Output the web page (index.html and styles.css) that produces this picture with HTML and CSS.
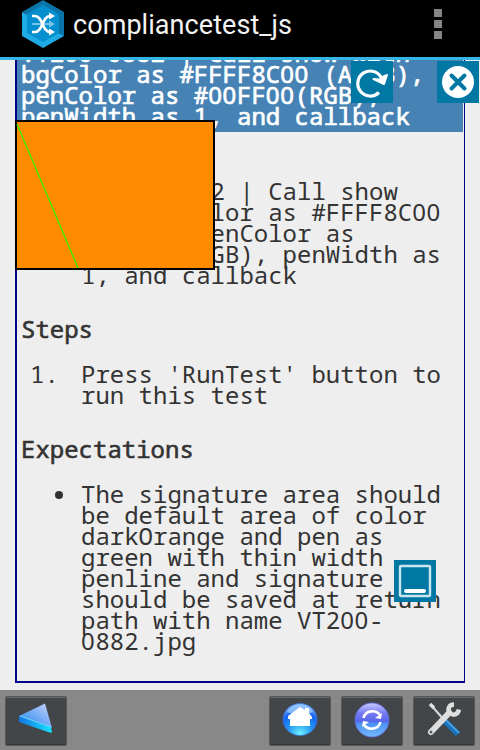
FILE: index.html
```html
<!DOCTYPE html>
<html lang="en">
<head>
<meta charset="utf-8">
<title>compliancetest_js</title>
<link rel="stylesheet" href="styles.css">
</head>
<body>
<header class="appbar">
  <svg class="logo" width="44" height="50" viewBox="0 0 44 50">
    <path fill="#0874a7" d="M22 0 43 12 22 25 1 12z"/>
    <path fill="#1eaae3" d="M1 12 22 24 43 12V36L22 48 1 36z"/>
    <path fill="#0874a7" d="M37 14 43 12V36L37 33z"/>
    <path fill="#068fce" d="M22 5 38 14V33L22 42 6 33V14z"/>
    <path fill="none" stroke="#72c4e8" stroke-width="2" d="M11 24h20"/>
    <path fill="#72c4e8" d="m28 20.500 6 3.500-6 3.500z"/>
    <path fill="none" stroke="#fff" stroke-width="2.600" d="M11 16h3c8 0 7 16 15 16h2M11 32h3c8 0 7-16 15-16h2"/>
    <path fill="#fff" d="m28 12.500 6 3.500-6 3.500zM28 28.500l6 3.500-6 3.500z"/>
  </svg>
  <h1 class="title">compliancetest_js</h1>
  <div class="overflow"><i></i><i></i><i></i></div>
</header>
<main class="view">
  <article class="test">
    <div class="name">VT2<span class="zero">00</span>-<span class="zero">0</span>882 | Call show with<br>bgColor as #FFFF8C<span class="zero">00</span> (ARGB),<br>penColor as #<span class="zero">00</span>FF<span class="zero">00</span>(RGB),<br>penWidth as 1, and callback</div>
    <ul class="list spec"><li>VT2<span class="zero">00</span>-<span class="zero">0</span>882 | Call show<br>with bgColor as #FFFF8C<span class="zero">00</span><br>(ARGB), penColor as<br>#<span class="zero">00</span>FF<span class="zero">00</span>(RGB), penWidth as<br>1, and callback</li></ul>
    <h2>Steps</h2>
    <div class="list step"><span class="num">1.</span><p>Press 'RunTest' button to<br>run this test</p></div>
    <h2>Expectations</h2>
    <div class="list expect"><span class="dot"></span><p>The signature area should<br>be default area of color<br>darkOrange and pen as<br>green with thin width<br>penline and signature<br>should be saved at return<br>path with name VT2<span class="zero">00</span>-<br><span class="zero">0</span>882.jpg</p></div>
  </article>
  <svg class="signature" width="200" height="150" viewBox="0 0 200 150">
    <rect x="1" y="1" width="198" height="148" fill="#ff8c00" stroke="#000" stroke-width="2"/>
    <path d="M2 4 63 148" stroke="#32f000" stroke-width="1.3"/>
  </svg>
  <svg class="float reload" width="42" height="42" viewBox="0 0 42 42">
    <rect width="42" height="42" fill="#0078a3"/>
    <path fill="none" stroke="#fff" stroke-width="3.200" d="M28 31.500A12.500 12.500 0 1 1 30.500 17"/>
    <path fill="#fff" stroke="#fff" stroke-width="2" stroke-linejoin="round" d="m22.500 18 6 .5 4-3 3.500-1.500-3 9z"/>
  </svg>
  <svg class="float close" width="42" height="42" viewBox="0 0 42 42">
    <rect width="42" height="42" fill="#0078a3"/>
    <circle cx="21" cy="21" r="16" fill="#fff"/>
    <path stroke="#0078a3" stroke-width="4" stroke-linecap="round" d="m14.500 14.500 13 13m0-13-13 13"/>
  </svg>
  <svg class="float minimize" width="42" height="42" viewBox="0 0 42 42">
    <rect width="42" height="42" fill="#0078a3"/>
    <rect x="6" y="6" width="30" height="30" rx="1" fill="none" stroke="#c9e5f0" stroke-width="2.400"/>
    <path stroke="#fff" stroke-width="4" stroke-linecap="round" d="M12 31h18"/>
  </svg>
</main>
<nav class="toolbar">
  <div class="btn back"><svg width="62" height="50" viewBox="0 0 62 50">
    <defs>
      <linearGradient id="face" x1="1" y1="0" x2="0" y2="1"><stop stop-color="#cfd8ff"/><stop offset=".5" stop-color="#70aaf5"/><stop offset="1" stop-color="#168be8"/></linearGradient>
      <linearGradient id="edge"><stop stop-color="#1675e4"/><stop offset="1" stop-color="#16e4ff"/></linearGradient>
    </defs>
    <path fill="url(#face)" d="M14 20 40 7.500 47 32z"/>
    <path fill="url(#edge)" d="M14 20 46 31 47 37 43 36 14 26z"/>
    <path stroke="#70d7ff" d="m15 20 31 11"/>
  </svg></div>
  <div class="btn"><svg width="62" height="50" viewBox="0 0 62 50">
    <defs><radialGradient id="blue" cx=".5" cy=".95" r=".9"><stop stop-color="#70f2ff"/><stop offset=".4" stop-color="#269bf5"/><stop offset=".75" stop-color="#1762ec"/><stop offset="1" stop-color="#83b8ff"/></radialGradient></defs>
    <ellipse cx="31" cy="23.500" rx="17" ry="16" fill="url(#blue)" stroke="#3673d8" stroke-width=".8"/>
    <path fill="#9dcbff" opacity=".75" d="M18 16c4-10 22-10 26 0-6 3-20 3-26 0z"/>
    <path fill="#fff" d="m31 11 5 3v-2h4v5l3 4v2h-2v7H21v-7h-2v-3z"/>
  </svg></div>
  <div class="btn"><svg width="62" height="50" viewBox="0 0 62 50">
    <defs><linearGradient id="orb" x2="0" y2="1"><stop stop-color="#c9caff"/><stop offset=".3" stop-color="#777bf5"/><stop offset=".55" stop-color="#5666ec"/><stop offset=".6" stop-color="#4c91f0"/><stop offset="1" stop-color="#74b9ff"/></linearGradient></defs>
    <circle cx="31" cy="24" r="17" fill="url(#orb)" stroke="#626de0" stroke-width=".8"/>
    <path fill="none" stroke="#fff" stroke-width="2.600" d="M22.500 22c2-8 13-9 17-2M39.500 26c-2 8-13 9-17 2"/>
    <path fill="#fff" d="m41 17-1 6-6-1zM21 31l1-6 6 1z"/>
  </svg></div>
  <div class="btn"><svg width="62" height="50" viewBox="0 0 62 50">
    <path stroke="#d5d8da" stroke-width="2" d="m18 9 14 16"/>
    <path stroke="#dfe1e3" stroke-width="3.500" d="m17 8 4 4"/>
    <path stroke="#1774bd" stroke-width="6" d="m32 25 13 13"/>
    <path stroke="#54a8e5" stroke-width="1.500" d="m33 24 13 13"/>
    <path stroke="#dedede" stroke-width="6" stroke-linecap="round" d="M18 36 36 17"/>
    <path fill="none" stroke="#dedede" stroke-width="4.500" d="M41 8.500c-5 0-7 5-4 8 3 4 8 2 9-3"/>
    <circle cx="18" cy="36" r="1.500" fill="#555b60"/>
  </svg></div>
</nav>
</body>
</html>
```

FILE: styles.css
```css
* { box-sizing: border-box; }
body {
  margin: 0;
  width: 480px;
  height: 750px;
  overflow: hidden;
  display: flex;
  flex-direction: column;
  background: #eee;
  color: #333;
}
.appbar {
  height: 60px;
  flex: none;
  display: flex;
  background: #000;
  border-bottom: 3px solid #33b5e5;
  padding-left: 21px;
}
.logo { flex: none; }
.title {
  margin: 0 0 0 8px;
  font: 400 27px/51px Roboto, sans-serif;
  letter-spacing: .06px;
  color: #f3f3f3;
  white-space: nowrap;
}
.overflow {
  margin: 9px 38px 0 auto;
  display: flex;
  flex-direction: column;
  gap: 3px;
}
.overflow i { width: 8px; height: 8px; background: #858585; }
.view {
  position: relative;
  height: 630px;
  flex: none;
  overflow: hidden;
}
.test {
  margin: -20px 15px 0;
  height: 643px;
  border: solid #00008b;
  border-width: 2px 1px 2px 2px;
  font: 24px/21px "Droid Sans Mono", "Noto Sans Mono", "DejaVu Sans Mono", monospace;
  white-space: nowrap;
}
.zero { font-family: "Noto Sans", sans-serif; letter-spacing: .67px; line-height: 0; }
.name {
  height: 90px;
  margin-right: 1px;
  padding-left: 4px;
  background: #4682b4;
  color: #fff;
  -webkit-text-stroke: .7px #fff;
}
.list { margin: 0; padding: 0 0 0 64px; }
.list p { margin: 0; }
.spec { margin-top: 48px; list-style: none; }
.test h2 {
  margin: 33px 0 24px 4px;
  font: inherit;
  -webkit-text-stroke: .6px #333;
}
.step, .expect { display: flex; padding-left: 0; }
.num { width: 51px; margin-left: 13px; }
.dot {
  width: 8px;
  height: 8px;
  margin: 8px 18px 0 38px;
  border-radius: 50%;
  background: #333;
}
.signature { position: absolute; left: 15px; top: 60px; }
.float { position: absolute; }
.reload { left: 351px; top: 1px; }
.close { left: 437px; top: 1px; }
.minimize { left: 394px; top: 500px; }
.toolbar {
  height: 60px;
  flex: none;
  display: flex;
  gap: 10px;
  padding: 6px 5px 0;
  background: #888;
}
.btn {
  width: 62px;
  height: 50px;
  flex: none;
  border-radius: 3px;
  background: #424649;
  box-shadow: inset 0 0 0 1px #55585a, inset 0 -2px #353739, inset 0 2px #65686a;
}
.btn svg { display: block; }
.back { margin-right: auto; }
```
